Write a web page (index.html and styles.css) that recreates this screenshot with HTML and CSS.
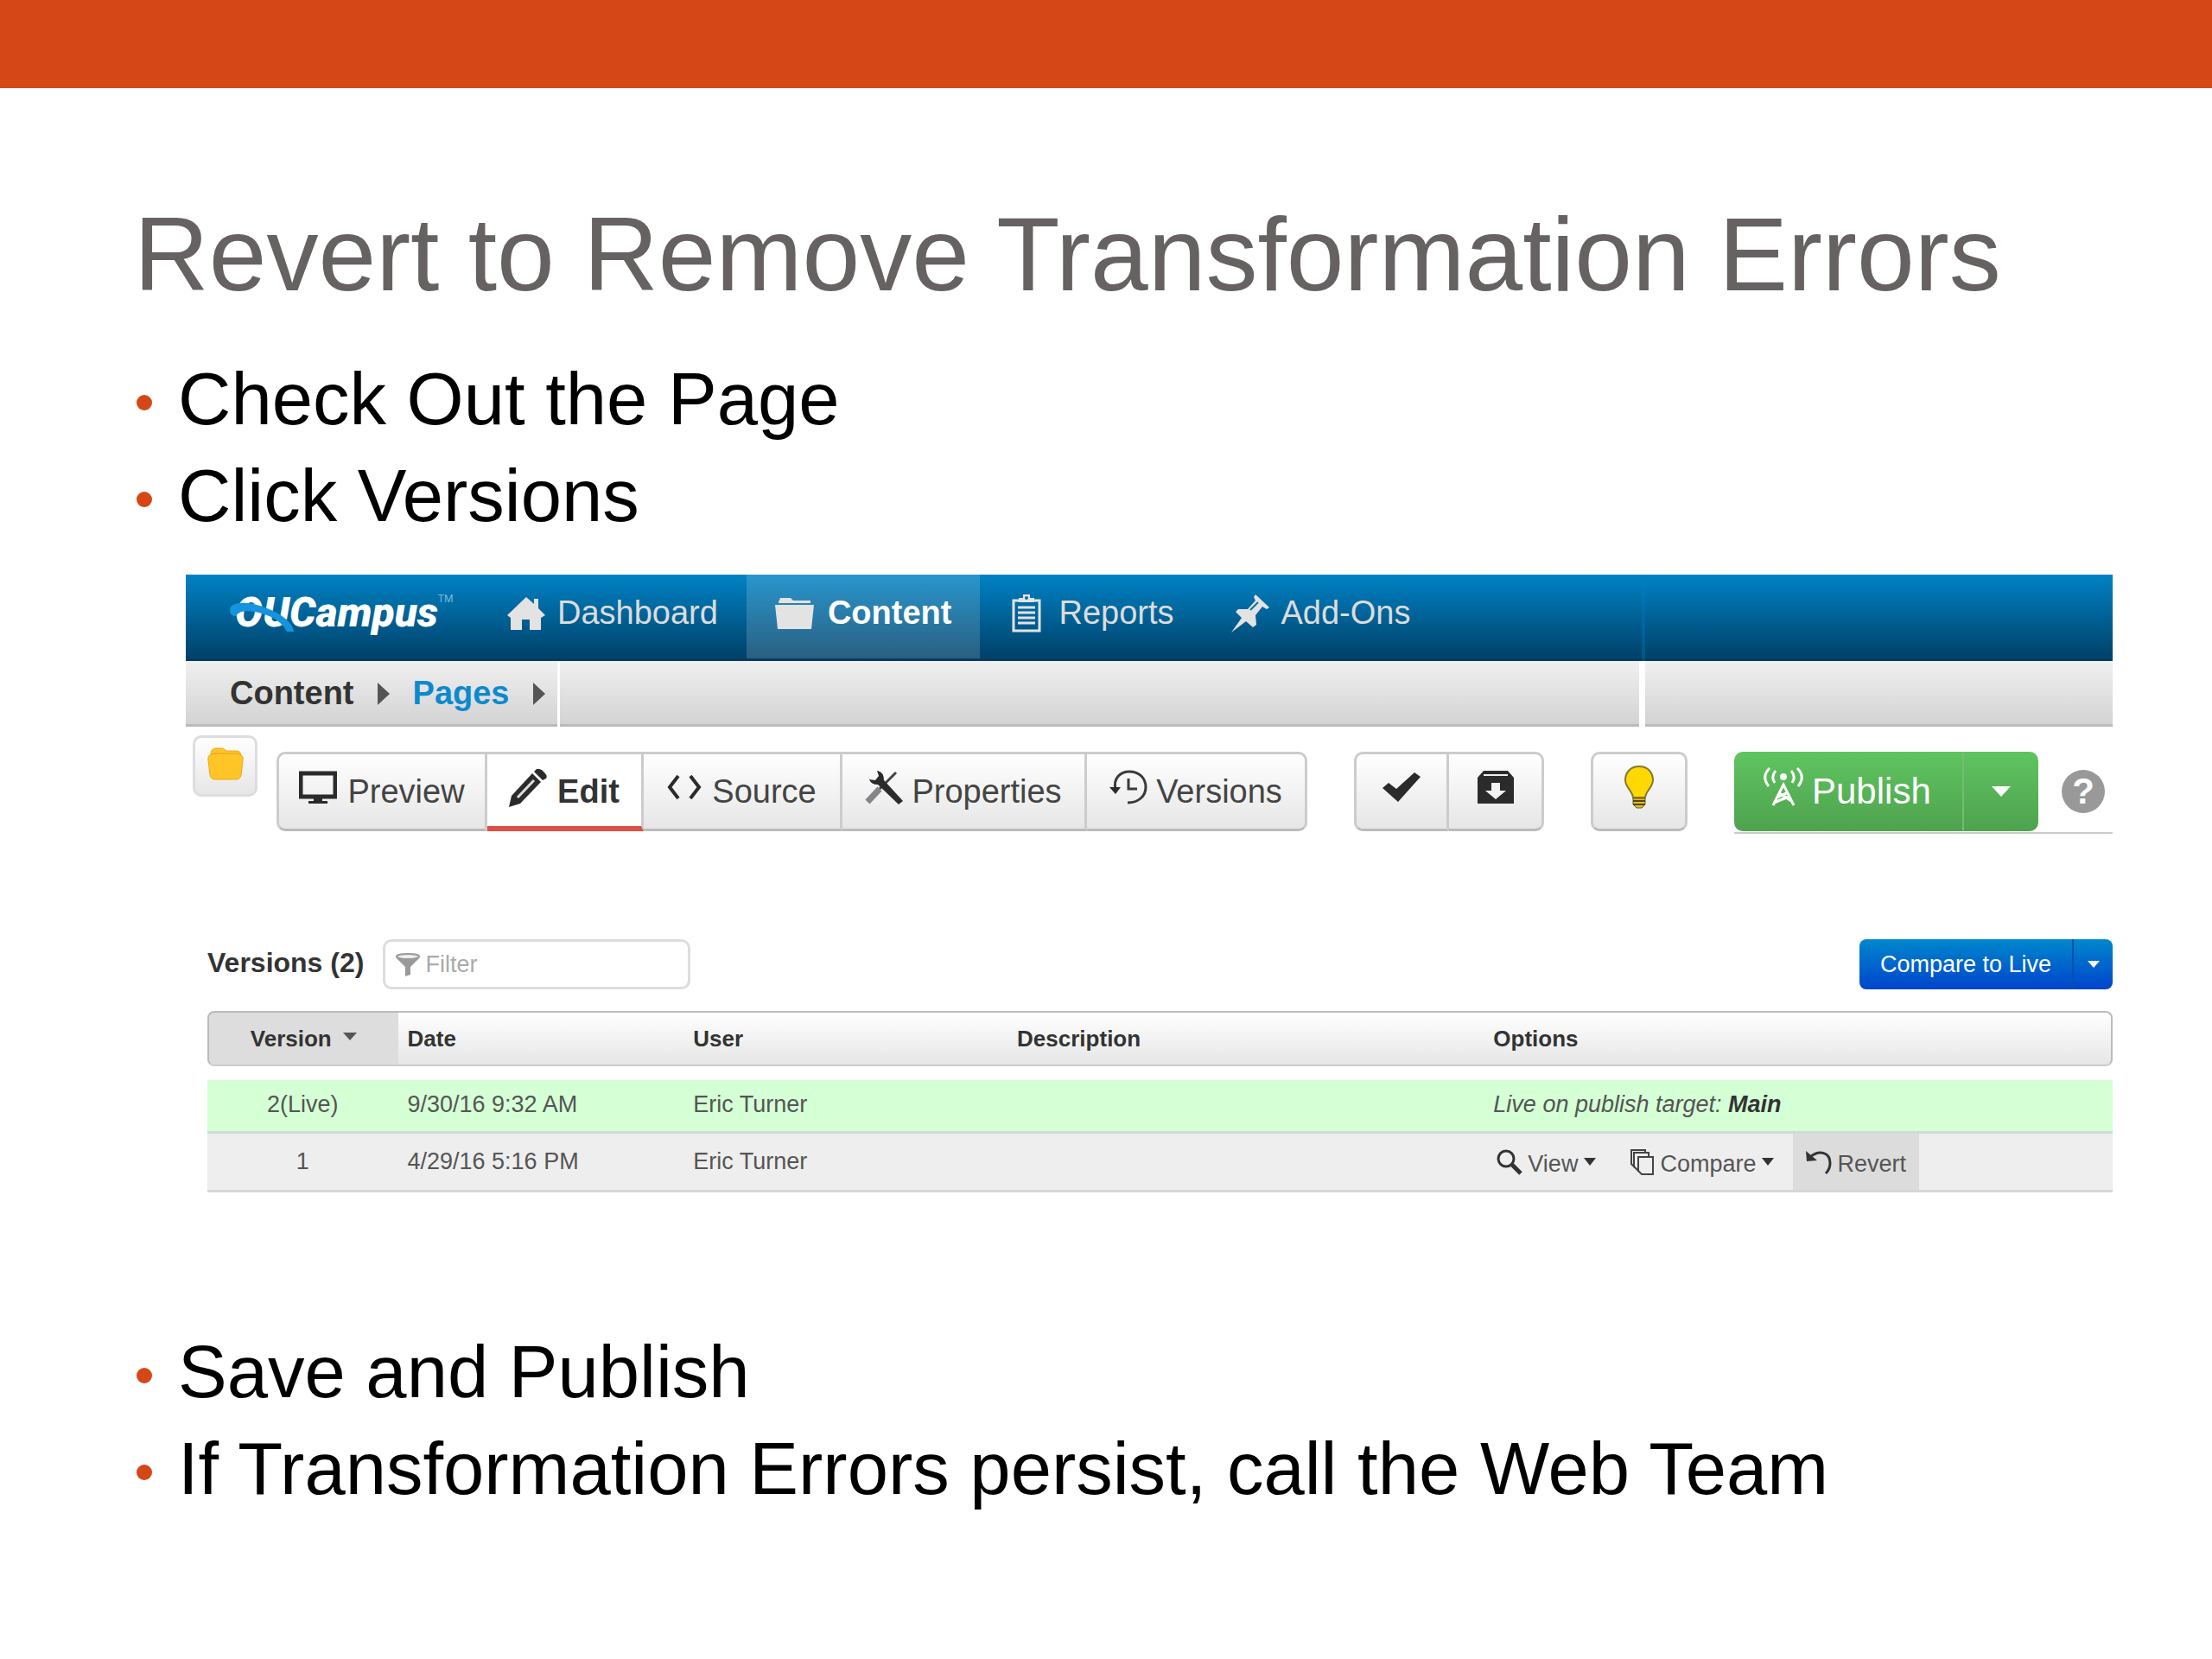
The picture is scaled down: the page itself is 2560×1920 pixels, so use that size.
FILE: index.html
```html
<!DOCTYPE html>
<html lang="en">
<head>
  <meta charset="UTF-8" />
  <meta name="viewport" content="width=device-width, initial-scale=1.0" />
  <title>Revert to Remove Transformation Errors</title>
  <link rel="stylesheet" href="styles.css">
</head>
<body>
<div class="top-bar"></div>
<main class="slide">
  <h1>Revert to Remove Transformation Errors</h1>

  <ul class="steps">
    <li>Check Out the Page</li>
    <li>Click Versions</li>
  </ul>

  <section class="app">
    <!-- ── Main navigation ── -->
    <nav class="navbar">
      <a class="logo" href="#">OUCampus<sup>TM</sup>
        <svg class="swoosh" viewBox="0 0 76 36"><path d="M1 10C1 0 22-1 44 8 62 15 74 25 75 35L67 35C62 25 52 18 38 14 24 10 12 10 8 17 3 17 1 14 1 10Z" fill="#1494dc"/></svg>
      </a>
      <a class="nav-item nav-home" href="#">
        <svg width="44" height="38" viewBox="0 0 44 38"><path d="M22 0 0 21 4 24 4 38H17V26H26V38H39V24L44 21 36 13V2H31V8Z" fill="#e3e3e3"/></svg>
        Dashboard
      </a>
      <a class="nav-item nav-content active" href="#">
        <svg width="45" height="36" viewBox="0 0 45 36"><path d="M4 5 6 0H18L21 3H41V6H4ZM0 8H45L42 36H3Z" fill="#e3e3e3"/></svg>
        Content
      </a>
      <a class="nav-item nav-reports" href="#">
        <svg width="34" height="44" viewBox="0 0 34 44"><path d="M2 7H32V42H2Z" fill="none" stroke="#e3e3e3" stroke-width="3"/><path d="M8 9V4H13V0H21V4H26V9Z" fill="#e3e3e3"/><path d="M7 15H27M7 21H27M7 27H27M7 33H27" stroke="#e3e3e3" stroke-width="3"/><circle cx="17" cy="4" r="2" fill="#0071ad"/></svg>
        Reports
      </a>
      <a class="nav-item nav-addons" href="#">
        <svg width="44" height="44" viewBox="0 0 44 44"><path d="M28 0 44 15 41 17 36 14 28 24 29 35 25 38 17 31 0 44 12 27 5 20 8 17 19 17 28 7 26 3Z" fill="#e3e3e3"/><path d="M31 9 22 18" stroke="#0071ad" stroke-width="2"/></svg>
        Add-Ons
      </a>
      <span class="nav-end"></span>
    </nav>

    <!-- ── Breadcrumb ── -->
    <div class="crumbs">
      <div class="crumb-trail">
        <a href="#">Content</a><i class="arrow"></i><a class="current" href="#">Pages</a><i class="arrow"></i>
      </div>
      <div class="crumb-fill"></div>
      <div class="crumb-end"></div>
    </div>

    <!-- ── Toolbar ── -->
    <div class="toolbar">
      <button class="btn folder-btn" aria-label="Files">
        <svg width="42" height="38" viewBox="0 0 42 38"><path d="M4 8Q4 1 10 1H18L22 4H34Q38 4 39 9 42 10 41 15L39 32Q38 37 33 37H9Q4 37 3 32L1 15Q0 10 4 8Z" fill="#ffc426" stroke="#edaa1c" stroke-width="1"/><path d="M4 9Q5 7 9 7H35L39 9" fill="none" stroke="#e7a41b"/></svg>
      </button>
      <div class="group tabs">
        <button class="btn tab-preview">
          <svg width="44" height="38" viewBox="0 0 44 38"><path d="M2 3H42V30H2Z" fill="none" stroke="#2b2b2b" stroke-width="5"/><path d="M17 31H27V35H33V38H11V35H17Z" fill="#2b2b2b"/></svg>
          Preview
        </button>
        <button class="btn tab-edit active">
          <svg width="44" height="44" viewBox="0 0 44 44"><path d="M0 44 3 31 27 5 37 15 13 40Z" fill="#2b2b2b"/><path d="M10 33 29 13" stroke="#ddd" stroke-width="3"/><path d="M29 3 32 0Q37-1 41 4 45 8 43 11L39 13Z" fill="#2b2b2b"/></svg>
          Edit
        </button>
        <button class="btn tab-source">
          <svg width="40" height="28" viewBox="0 0 40 28"><path d="M13 1 3 14 13 27M27 1 37 14 27 27" fill="none" stroke="#2b2b2b" stroke-width="4"/></svg>
          Source
        </button>
        <button class="btn tab-properties">
          <svg width="44" height="40" viewBox="0 0 44 40"><path d="M3 37 17 22" stroke="#858589" stroke-width="7"/><path d="M17 22 36 3" stroke="#444" stroke-width="3"/><path d="M14 1Q22 2 22 12L44 36 39 40 15 17Q7 17 5 11L12 12 16 7Z" fill="#2b2b2b"/></svg>
          Properties
        </button>
        <button class="btn tab-versions">
          <svg width="44" height="40" viewBox="0 0 44 40"><path d="M7 23C4 9 13 2 23 2 35 2 42 10 42 20S34 38 21 38" fill="none" stroke="#3a3a3a" stroke-width="3"/><path d="M0 20H13L7 28Z" fill="#2b2b2b"/><path d="M22 10V22H32" fill="none" stroke="#3a3a3a" stroke-width="3"/></svg>
          Versions
        </button>
      </div>
      <div class="group pair">
        <button class="btn" aria-label="Check in">
          <svg width="44" height="34" viewBox="0 0 44 34"><path d="M0 18 7 12 16 19 37 0 44 5 18 34Z" fill="#2b2b2b"/></svg>
        </button>
        <button class="btn" aria-label="Archive">
          <svg width="44" height="40" viewBox="0 0 44 40"><path d="M8 1H36L43 9V39H1V9Z" fill="#2b2b2b"/><path d="M8 6H36" stroke="#eee" stroke-width="2"/><path d="M17 15H27V24H34L22 34 10 24H17Z" fill="#f3f3f3"/></svg>
        </button>
      </div>
      <button class="btn bulb-btn" aria-label="Suggestions">
        <svg width="34" height="50" viewBox="0 0 34 50"><path d="M17 1C6 1 1 9 1 17 1 25 9 29 10 37H24C25 29 33 25 33 17 33 9 28 1 17 1Z" fill="#ffd800" stroke="#857a32" stroke-width="2"/><path d="M10 38H24V45L20 49H14L10 45Z" fill="#e5bd20" stroke="#61581e"/><path d="M10 41H24M10 45H24" stroke="#4e481e" stroke-width="2"/></svg>
      </button>
      <div class="publish-area">
        <div class="publish-group">
          <button class="publish">
            <svg width="46" height="46" viewBox="0 0 46 46"><g fill="none" stroke="#fff" stroke-width="3"><path d="M7 1Q-3 11 6 22M14 4Q8 11 13 18M39 1Q49 11 40 22M32 4Q38 11 33 18M11 44 23 20 35 44M15 35 29 29M17 29 32 39M12 41 29 34"/></g><circle cx="23" cy="11" r="4" fill="#fff"/></svg>
            Publish
          </button>
          <button class="publish-more" aria-label="More publish options"><i class="caret"></i></button>
        </div>
        <a class="help" href="#" aria-label="Help">?</a>
      </div>
    </div>

    <!-- ── Versions list ── -->
    <div class="versions">
      <div class="versions-head">
        <h2>Versions (2)</h2>
        <label class="filter">
          <svg width="28" height="27" viewBox="0 0 28 27"><path d="M0 5Q14 11 28 5L17 16V25L11 27V16Z" fill="#999"/><ellipse cx="14" cy="4" rx="13" ry="3" fill="#eee" stroke="#999" stroke-width="2"/></svg>
          <input type="text" placeholder="Filter" aria-label="Filter" />
        </label>
        <div class="compare-group">
          <button class="compare">Compare to Live</button>
          <button class="compare-more" aria-label="More compare options"><i class="caret small"></i></button>
        </div>
      </div>

      <table>
        <thead>
          <tr>
            <th class="col-version">Version<i class="caret sort"></i></th>
            <th class="col-date">Date</th>
            <th class="col-user">User</th>
            <th class="col-desc">Description</th>
            <th>Options</th>
          </tr>
        </thead>
        <tbody>
          <tr class="live">
            <td>2(Live)</td>
            <td>9/30/16 9:32 AM</td>
            <td>Eric Turner</td>
            <td></td>
            <td><em>Live on publish target: <b>Main</b></em></td>
          </tr>
          <tr>
            <td>1</td>
            <td>4/29/16 5:16 PM</td>
            <td>Eric Turner</td>
            <td></td>
            <td class="options">
              <div class="actions">
                <button>
                  <svg width="30" height="30" viewBox="0 0 30 30"><circle cx="11" cy="11" r="9" fill="none" stroke="#333" stroke-width="3"/><path d="M18 18 28 28" stroke="#333" stroke-width="5"/></svg>
                  View<i class="caret dark"></i>
                </button>
                <button>
                  <svg width="28" height="30" viewBox="0 0 28 30"><g fill="#eee" stroke="#444" stroke-width="2"><path d="M1 1H17V21H5L1 17Z"/><path d="M4 4H21V25H9L4 20Z"/><path d="M9 9H26V29H13L9 25Z"/></g></svg>
                  Compare<i class="caret dark"></i>
                </button>
                <button class="revert">
                  <svg width="30" height="28" viewBox="0 0 30 28"><path d="M5 8C16-1 28 3 28 15 28 20 26 24 23 27" fill="none" stroke="#333" stroke-width="3"/><path d="M0 1 1 13 13 12Z" fill="#333"/></svg>
                  Revert
                </button>
              </div>
            </td>
          </tr>
        </tbody>
      </table>
    </div>
  </section>

  <ul class="steps">
    <li>Save and Publish</li>
    <li>If Transformation Errors persist, call the Web Team</li>
  </ul>
</main>
</body>
</html>
```
FILE: styles.css
```css
*{box-sizing:border-box;}
body{margin:0;background:#fff;color:#000;font-family:"Liberation Sans",Arial,sans-serif;}
a{color:inherit;text-decoration:none;}
button{font:inherit;color:inherit;margin:0;padding:0;border:0;background:none;cursor:pointer;}
svg{flex:none;display:block;}

/* slide */
.top-bar{height:102px;background:#d54717;}
.slide{padding:125px 115px 0 155px;}
h1{margin:0 0 45px;font-size:120px;line-height:134px;font-weight:normal;color:#666262;}
.steps{list-style:none;margin:0;padding:0 0 0 3px;font-size:85px;line-height:112px;}
.steps li{display:flex;align-items:center;gap:30px;}
.steps li::before{content:"";width:18px;height:18px;margin-top:8px;border-radius:50%;background:#d54717;}
.app{margin:35px 0 152px 60px;font-size:38px;}

/* navbar */
.navbar{display:flex;height:100px;background:linear-gradient(#0082c4,#00426a 96%,#003a58);color:#dcdcdc;}
.logo{position:relative;width:325px;padding-left:57px;font-family:Roboto,"Liberation Sans",sans-serif;font-size:48px;line-height:88px;font-weight:900;font-style:italic;color:#fff;white-space:nowrap;}
.logo sup{font-size:12px;font-weight:normal;font-style:normal;line-height:12px;vertical-align:28px;color:#7fb6d8;}
.swoosh{position:absolute;left:50px;top:31px;width:76px;height:36px;}
.nav-item{display:flex;align-items:center;gap:14px;padding:0 33px 12px;}
.nav-item svg{margin-top:2px;}
.nav-home{padding-left:47px;}
.nav-content{gap:16px;margin-bottom:3px;padding-bottom:9px;}
.nav-item.active{background:rgba(255,255,255,.16);color:#fff;font-weight:bold;}
.nav-reports{gap:20px;padding-left:37px;}
.nav-addons{padding-left:33px;}
.nav-end{width:545px;margin-left:auto;border-left:4px solid rgba(0,130,200,.3);}

/* breadcrumb */
.crumbs{display:flex;height:76px;}
.crumbs > div{background:linear-gradient(#f0f0f0,#d3d3d3);border-bottom:3px solid #bbb;}
.crumb-trail{display:flex;align-items:center;gap:27px;padding:2px 14px 0 51px;font-weight:bold;color:#333;}
.crumb-trail .current{color:#0d8ace;}
.arrow{border:solid transparent;border-width:13px 0 13px 14px;border-left-color:#555;}
.crumb-fill{flex:1;margin-left:3px;}
.crumb-end{width:541px;margin-left:7px;}

/* toolbar */
.toolbar{display:flex;align-items:flex-start;margin-top:10px;padding-left:8px;color:#444;}
.btn{display:flex;align-items:center;justify-content:center;gap:12px;height:92px;border:3px solid #ccc;border-bottom-color:#bbb;border-radius:10px;background:linear-gradient(#fff,#e6e6e6);}
.btn svg{margin-bottom:10px;}
.folder-btn{width:75px;height:71px;margin-right:22px;border-color:#ddd;}
.folder-btn svg{margin-bottom:6px;}
.group,.bulb-btn,.publish-area{margin-top:19px;}
.group{display:flex;}
.group .btn{border-radius:0;}
.group .btn + .btn{border-left-width:0;}
.group .btn:first-child{border-radius:10px 0 0 10px;}
.group .btn:last-child{border-radius:0 10px 10px 0;}
.tab-preview{width:244px;}
.tab-edit{width:181px;padding-top:4px;}
.tab-source{width:230px;}
.tab-properties{width:283px;}
.tab-versions{width:255px;}
.tab-properties,.tab-versions{gap:10px;}
.group .active{background:#fff;border-bottom:6px solid #dd5044;font-weight:bold;color:#333;}
.pair{margin-left:54px;}
.pair .btn{width:110px;}
.bulb-btn{width:112px;margin-left:54px;}
.publish-area{flex:1;display:flex;align-items:center;justify-content:space-between;height:95px;margin-left:54px;padding:0 9px 1px 0;border-bottom:2px solid #ccc;}
.publish-group{display:flex;height:92px;border-radius:10px;background:linear-gradient(#5fc45f,#4fa24f);color:#fff;font-size:42px;}
.publish{display:flex;align-items:center;gap:10px;padding:0 36px 0 34px;}
.publish svg{margin-bottom:10px;}
.publish-more{display:flex;align-items:center;justify-content:center;width:88px;border-left:2px solid #72bd72;}
.caret{display:inline-block;border:solid transparent;border-width:12px 11px 0;border-top-color:currentColor;}
.caret.small{border-width:8px 7px 0;}
.help{width:50px;height:50px;border-radius:50%;background:#999;color:#fff;font-size:42px;line-height:50px;font-weight:bold;text-align:center;}

/* versions list */
.versions{padding-left:25px;font-size:27px;}
.versions-head{display:flex;align-items:center;margin:122px 0 25px;}
h2{margin:0 22px 4px 0;font-size:32px;line-height:52px;color:#333;}
.filter{display:flex;align-items:center;gap:6px;width:356px;height:58px;padding:0 12px;border:3px solid #ddd;border-radius:10px;background:#fff;}
.filter input{flex:1;min-width:0;padding:0;border:0;background:none;font:inherit;}
.filter input::placeholder{color:#aaa;}
.compare-group{display:flex;height:58px;margin-left:auto;border-radius:8px;background:linear-gradient(#0088cc,#0044cc);color:#fff;}
.compare{padding:0 24px;}
.compare-more{display:flex;align-items:center;justify-content:center;width:47px;border-left:2px solid #0050b0;}

table{width:100%;table-layout:fixed;border-spacing:0;color:#555;}
th,td{padding:0 0 0 11px;text-align:left;}
th{height:64px;border:solid #bbb;border-width:2px 0;border-bottom-color:#ccc;background:linear-gradient(#fff,#e6e6e6);font-size:26px;color:#333;}
th:first-child{border-left-width:2px;border-radius:8px 0 0 8px;background:#ddd;}
th:last-child{border-right-width:2px;border-radius:0 8px 8px 0;}
.col-version{width:10%;}
.col-date{width:15%;}
.col-user{width:17%;}
.col-desc{width:25%;}
th:first-child,td:first-child{padding:0;text-align:center;}
.sort{margin-left:13px;vertical-align:7px;border-width:9px 8px 0;border-top-color:#555;}
tbody::before{content:"";display:block;height:16px;}
td{height:68px;border-bottom:3px solid #d6d6d6;background:#eee;}
.live td{height:62px;padding-bottom:2px;border-color:#d3dbd3;background:#d5ffd5;}
.live b{color:#333;}
.actions{display:flex;height:65px;}
.actions button{display:flex;align-items:center;gap:6px;margin-right:22px;padding:6px 14px 0 4px;}
.actions svg{margin-bottom:6px;}
.actions .caret{margin:0 0 6px 1px;border-width:9px 7px 0;border-top-color:#333;}
.actions .revert{padding:6px 15px 0;margin-left:-14px;background:#dcdcdc;}
```
